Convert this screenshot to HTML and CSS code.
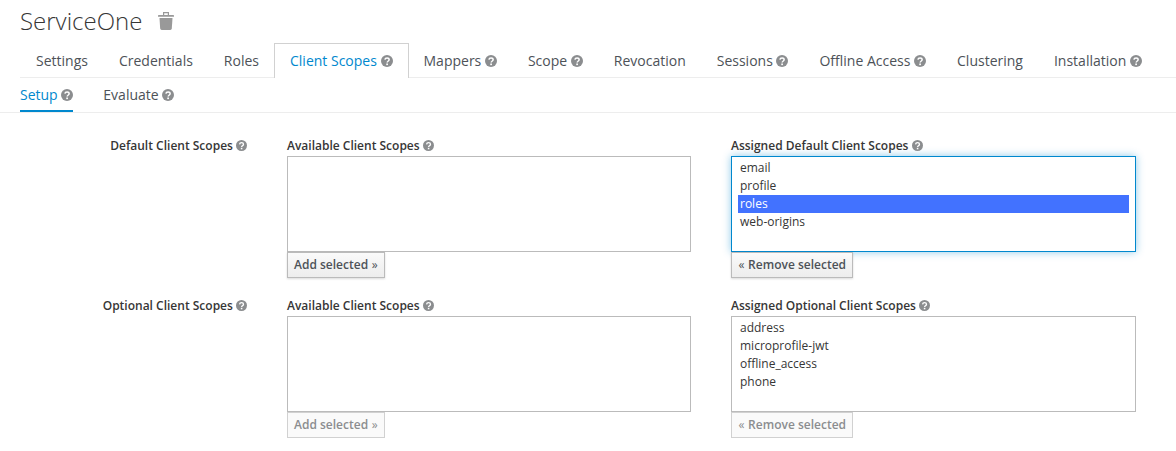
FILE: index.html
```html
<!DOCTYPE html>
<html lang="en">
<head>
    <meta charset="UTF-8">
    <meta name="viewport" content="width=device-width, initial-scale=1.0">
    <title>ServiceOne</title>
    <link rel="stylesheet" href="styles.css">
</head>
<body>
    <svg class="defs" width="0" height="0" aria-hidden="true">
        <symbol id="help" viewBox="0 0 24 24">
            <circle cx="12" cy="12" r="12" fill="currentColor"/>
            <path d="M7.8 9.4c.3-2.3 2-3.600 4.300-3.600 2.400 0 4.200 1.400 4.200 3.400 0 1.700-1 2.500-2.200 3.300-1 .7-1.700 1.200-1.700 2.500" fill="none" stroke="#fff" stroke-width="3"/>
            <rect x="10.500" y="17" width="3.400" height="3.300" fill="#fff"/>
        </symbol>
    </svg>

    <header class="title">
        <h1>ServiceOne</h1>
        <svg class="trash" viewBox="0 0 16 18" aria-label="Delete">
            <path d="M5 0h6v3h4.300c.4 0 .7.300.7.700v1H0v-1c0-.4.300-.7.700-.7H5zM6.200 1.200V3h3.600V1.200z" fill-rule="evenodd"/>
            <path d="M1.500 6h13l-.7 10.600c-.1.800-.7 1.400-1.500 1.400H3.700c-.8 0-1.400-.6-1.500-1.400z"/>
        </svg>
    </header>

    <nav class="tabs">
        <a>Settings</a>
        <a>Credentials</a>
        <a>Roles</a>
        <a class="active">Client Scopes <svg class="help"><use href="#help"/></svg></a>
        <a>Mappers <svg class="help"><use href="#help"/></svg></a>
        <a>Scope <svg class="help"><use href="#help"/></svg></a>
        <a>Revocation</a>
        <a>Sessions <svg class="help"><use href="#help"/></svg></a>
        <a>Offline Access <svg class="help"><use href="#help"/></svg></a>
        <a>Clustering</a>
        <a>Installation <svg class="help"><use href="#help"/></svg></a>
    </nav>

    <nav class="subtabs">
        <a class="active">Setup <svg class="help"><use href="#help"/></svg></a>
        <a>Evaluate <svg class="help"><use href="#help"/></svg></a>
    </nav>

    <form class="scopes">
        <div class="row-label">Default Client Scopes <svg class="help small"><use href="#help"/></svg></div>
        <div class="field">
            <label>Available Client Scopes <svg class="help small"><use href="#help"/></svg></label>
            <ul class="listbox"></ul>
            <button type="button" class="btn">Add selected <span class="arrows">»</span></button>
        </div>
        <div class="field">
            <label>Assigned Default Client Scopes <svg class="help small"><use href="#help"/></svg></label>
            <ul class="listbox focused">
                <li>email</li>
                <li>profile</li>
                <li class="selected">roles</li>
                <li>web-origins</li>
            </ul>
            <button type="button" class="btn"><span class="arrows">«</span> Remove selected</button>
        </div>

        <div class="row-label">Optional Client Scopes <svg class="help small"><use href="#help"/></svg></div>
        <div class="field">
            <label>Available Client Scopes <svg class="help small"><use href="#help"/></svg></label>
            <ul class="listbox"></ul>
            <button type="button" class="btn" disabled>Add selected <span class="arrows">»</span></button>
        </div>
        <div class="field">
            <label>Assigned Optional Client Scopes <svg class="help small"><use href="#help"/></svg></label>
            <ul class="listbox">
                <li>address</li>
                <li>microprofile-jwt</li>
                <li>offline_access</li>
                <li>phone</li>
            </ul>
            <button type="button" class="btn" disabled><span class="arrows">«</span> Remove selected</button>
        </div>
    </form>
</body>
</html>
```

FILE: styles.css
```css
body { margin: 0; padding: 0 20px; font-family: "Open Sans", sans-serif; font-size: 12px; color: #363636; background-color: #fff; overflow: hidden; }
.defs { position: absolute; }

.title { display: flex; align-items: center; box-sizing: border-box; height: 43px; padding-bottom: 1px; }
.title h1 { margin: 0; font-size: 24px; font-weight: 300; line-height: 42px; }
.trash { width: 16px; height: 18px; margin-left: 16px; fill: #999; }

.help { width: 12px; height: 12px; color: #8b8d8f; vertical-align: -1px; }
.help.small { width: 11px; height: 11px; }

.tabs { display: flex; height: 34px; border-bottom: 1px solid #ededed; font-size: 14px; margin-right: -20px; }
.tabs a { padding: 6px 15px 0; height: 27px; border: 1px solid transparent; border-bottom: 0; line-height: 22px; color: #4d5258; }
.tabs a + a { margin-left: -1px; }
.tabs a.active { height: 28px; border-color: #d1d1d1; background-color: #fff; color: #0088ce; }

.subtabs { display: flex; gap: 30px; height: 34px; margin: 0 -20px; padding: 0 20px; border-bottom: 1px solid #ededed; font-size: 14px; }
.subtabs a { height: 34px; line-height: 34px; color: #4d5258; }
.subtabs a.active { height: 32px; border-bottom: 2px solid #0088ce; color: #0088ce; }

.scopes { display: grid; grid-template-columns: 227px 404px 405px; column-gap: 40px; row-gap: 18px; margin-top: 23px; }
.row-label { padding-top: 1px; text-align: right; font-weight: 600; line-height: 18px; }
.field label { display: block; height: 20px; font-weight: 600; line-height: 20px; }

.listbox { box-sizing: border-box; height: 96px; margin: 0; padding: 2px 6px; list-style: none; border: 1px solid #bbb; background-color: #fff; }
.listbox li { height: 18px; padding: 0 2px; line-height: 18px; }
.listbox li.selected { background-color: #4272ff; color: #fff; }
.listbox.focused { border-color: #0088ce; box-shadow: 0 0 8px rgba(0, 136, 206, 0.45); }

.btn { display: block; height: 26px; padding: 0 6px 2px; font: 600 12px "Open Sans", sans-serif; color: #4d5258; border: 1px solid #bbb; background: linear-gradient(#fafafa, #ededed); box-shadow: 0 1px 2px rgba(0, 0, 0, 0.15); }
.btn:disabled { color: #8b8d8f; background: #fafafa; border-color: #d1d1d1; box-shadow: none; }
.arrows { display: inline-block; width: 7px; font-weight: 400; }
```
